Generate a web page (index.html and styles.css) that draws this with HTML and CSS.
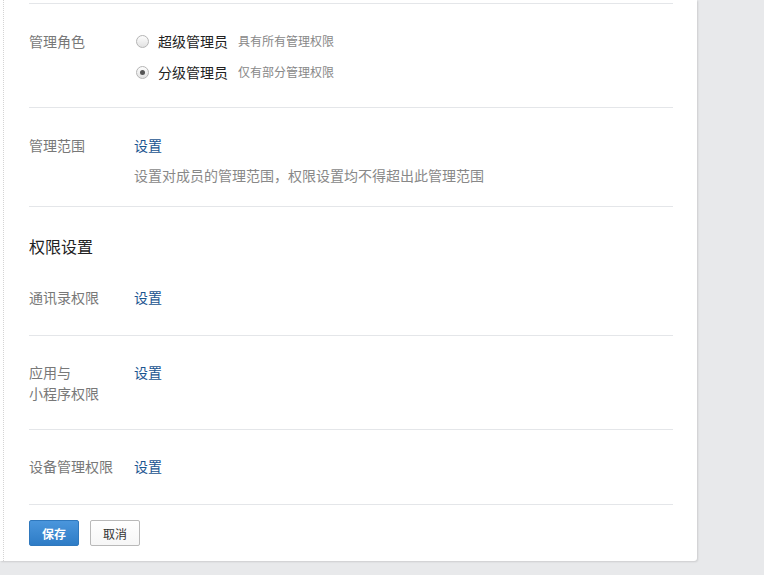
FILE: index.html
```html
<!DOCTYPE html>
<html lang="zh-CN">
<head>
    <meta charset="UTF-8">
    <meta name="viewport" content="width=device-width, initial-scale=1.0">
    <title>管理员设置</title>
    <link rel="stylesheet" href="styles.css">
</head>
<body>
    <div class="card">
        <div class="content">
            <div class="row row-role">
                <div class="label">管理角色</div>
                <div class="value">
                    <div class="radio-line">
                        <span class="radio"></span>
                        <span class="radio-text">超级管理员</span>
                        <span class="hint">具有所有管理权限</span>
                    </div>
                    <div class="radio-line">
                        <span class="radio checked"></span>
                        <span class="radio-text">分级管理员</span>
                        <span class="hint">仅有部分管理权限</span>
                    </div>
                </div>
            </div>

            <div class="row row-range">
                <div class="label">管理范围</div>
                <div class="value">
                    <a class="link" href="#">设置</a>
                    <p class="desc">设置对成员的管理范围，权限设置均不得超出此管理范围</p>
                </div>
            </div>

            <h3 class="section-title">权限设置</h3>

            <div class="row row-first">
                <div class="label">通讯录权限</div>
                <div class="value"><a class="link" href="#">设置</a></div>
            </div>

            <div class="row row-app">
                <div class="label">应用与<br>小程序权限</div>
                <div class="value"><a class="link" href="#">设置</a></div>
            </div>

            <div class="row">
                <div class="label">设备管理权限</div>
                <div class="value"><a class="link" href="#">设置</a></div>
            </div>

            <div class="actions">
                <button class="btn btn-primary">保存</button>
                <button class="btn">取消</button>
            </div>
        </div>
    </div>
</body>
</html>
```

FILE: styles.css
```css
body {
    margin: 0;
    background-color: #e8e9eb;
    font-family: "Noto Sans CJK SC", "Noto Sans", sans-serif;
    font-size: 14px;
    color: #333;
    height: 575px;
    overflow: hidden;
}

.card {
    width: 697px;
    background-color: #fff;
    border-radius: 0 0 3px 0;
    box-shadow: 1px 1px 2px rgba(0,0,0,0.12);
}

.content {
    margin-left: 3px;
    border-left: 1px dotted #d4d4d4;
    padding: 3px 24px 15px 25px;
}

.row {
    display: flex;
    border-top: 1px solid #e4e6e9;
    padding: 26px 0 27px;
    line-height: 20px;
}

.label {
    width: 105px;
    flex-shrink: 0;
    color: #787878;
    line-height: 21px;
}

.value {
    flex: 1;
}

.row-role {
    padding: 27px 0 25px;
}

.row-role .label {
    line-height: 20px;
}

.row-role .radio-line {
    display: flex;
    align-items: center;
    height: 20px;
}

.row-role .radio-line + .radio-line {
    margin-top: 11px;
}

.radio {
    width: 11px;
    height: 11px;
    border: 1px solid #b5b5b5;
    border-radius: 50%;
    background: linear-gradient(#fdfdfd, #e2e2e2);
    margin: 0 9px 0 2px;
    position: relative;
}

.radio.checked::after {
    content: "";
    position: absolute;
    left: 3px;
    top: 3px;
    width: 5px;
    height: 5px;
    border-radius: 50%;
    background-color: #555;
}

.radio-text {
    color: #222;
}

.hint {
    font-size: 12px;
    color: #888;
    margin-left: 10px;
}

.row-range {
    padding: 27px 0 21px;
}

.row-range .label {
    line-height: 20px;
}

.link {
    color: #1a5590;
    text-decoration: none;
}

.desc {
    margin: 10px 0 0;
    color: #888;
}

.section-title {
    margin: 0;
    border-top: 1px solid #e4e6e9;
    padding: 27px 0 16px;
    font-size: 16px;
    font-weight: normal;
    line-height: 24px;
    color: #222;
}

.row-first {
    border-top: none;
    padding-top: 13px;
    padding-bottom: 27px;
}

.row-app {
    padding-bottom: 25px;
}

.actions {
    border-top: 1px solid #e4e6e9;
    padding-top: 15px;
    display: flex;
    gap: 11px;
}

.btn {
    width: 50px;
    height: 26px;
    padding: 0;
    font-family: inherit;
    font-size: 12px;
    background: linear-gradient(#fff, #f6f6f6);
    border: 1px solid #b9b9b9;
    border-radius: 2px;
    color: #333;
    cursor: pointer;
}

.btn-primary {
    background: linear-gradient(#4a96dc, #2e7cc6);
    border-color: #2f78bd;
    color: #fff;
    font-weight: bold;
}
```
